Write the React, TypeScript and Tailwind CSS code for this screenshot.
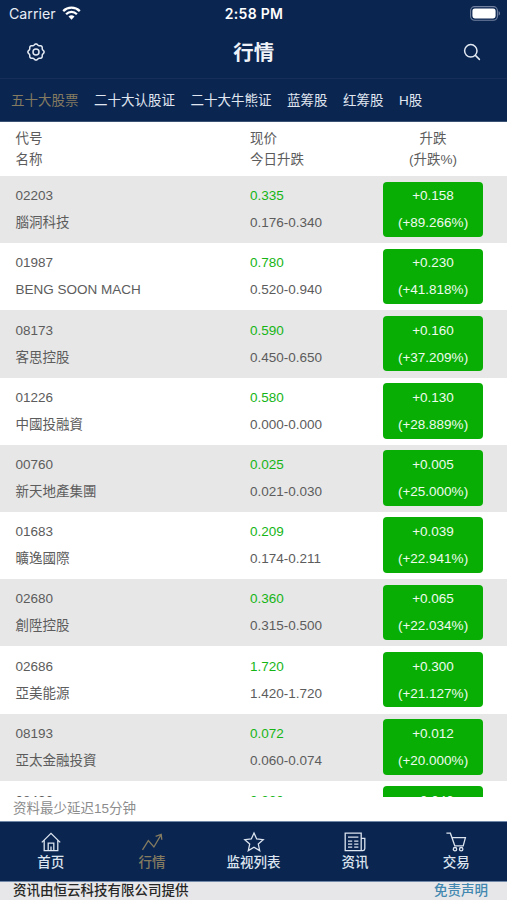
import type { ReactNode } from "react";

type Stock = {
  code: string;
  name: string;
  price: string;
  range: string;
  change: string;
  percent: string;
};

const categories = ["五十大股票", "二十大认股证", "二十大牛熊证", "蓝筹股", "红筹股", "H股"];

const stocks: Stock[] = [
  { code: "02203", name: "腦洞科技", price: "0.335", range: "0.176-0.340", change: "+0.158", percent: "(+89.266%)" },
  { code: "01987", name: "BENG SOON MACH", price: "0.780", range: "0.520-0.940", change: "+0.230", percent: "(+41.818%)" },
  { code: "08173", name: "客思控股", price: "0.590", range: "0.450-0.650", change: "+0.160", percent: "(+37.209%)" },
  { code: "01226", name: "中國投融資", price: "0.580", range: "0.000-0.000", change: "+0.130", percent: "(+28.889%)" },
  { code: "00760", name: "新天地產集團", price: "0.025", range: "0.021-0.030", change: "+0.005", percent: "(+25.000%)" },
  { code: "01683", name: "曠逸國際", price: "0.209", range: "0.174-0.211", change: "+0.039", percent: "(+22.941%)" },
  { code: "02680", name: "創陞控股", price: "0.360", range: "0.315-0.500", change: "+0.065", percent: "(+22.034%)" },
  { code: "02686", name: "亞美能源", price: "1.720", range: "1.420-1.720", change: "+0.300", percent: "(+21.127%)" },
  { code: "08193", name: "亞太金融投資", price: "0.072", range: "0.060-0.074", change: "+0.012", percent: "(+20.000%)" },
  { code: "08426", name: "", price: "0.260", range: "", change: "+0.040", percent: "" },
];

function GearIcon() {
  // eight-lobed outline, sampled around the centre
  const points = Array.from({ length: 96 }, (_, i) => {
    const a = (i / 96) * Math.PI * 2;
    const r = 7.5 + 0.6 * Math.cos(8 * a);
    return `${(9 + r * Math.cos(a)).toFixed(2)},${(9 + r * Math.sin(a)).toFixed(2)}`;
  }).join(" ");
  return (
    <svg className="mb-[2px]" width="18" height="18" viewBox="0 0 18 18" fill="none" stroke="#e3e9f2" strokeWidth="1.5">
      <polygon points={points} strokeLinejoin="round" />
      <circle cx="9" cy="9" r="3" />
    </svg>
  );
}

function StatusBar() {
  return (
    <div className="grid h-7 grid-cols-3 items-center pb-[1px] pl-[9px] pr-[6px] font-['Inter','Liberation_Sans',sans-serif] text-[14px] text-[#e8edf5]">
      <div className="flex items-center gap-[6px]">
        <span className="text-[14.2px]">Carrier</span>
        <svg width="19" height="14" viewBox="0 0 19 14" fill="none" stroke="#fff" strokeWidth="2.3">
          <path d="M1.2 5.1a11.8 11.8 0 0 1 16.6 0" />
          <path d="M4.1 8.2a7.6 7.6 0 0 1 10.8 0" />
          <path d="M9.5 13.7 6.5 10.6a4.3 4.3 0 0 1 6 0z" fill="#fff" stroke="none" />
        </svg>
      </div>
      <span className="-ml-[2px] text-center text-[14px] font-semibold tracking-[0.3px] text-white">2:58 PM</span>
      <svg className="justify-self-end" width="31" height="15" viewBox="0 0 31 15">
        <rect x="0.6" y="0.6" width="26.8" height="13.6" rx="4" fill="none" stroke="#71819f" strokeWidth="1.1" />
        <rect x="2.4" y="2.4" width="23.2" height="10" rx="2.4" fill="#fff" />
        <path d="M28.6 5.1c1.9.8 1.9 3.8 0 4.6z" fill="#71819f" />
      </svg>
    </div>
  );
}

function StockRow({ stock, shaded }: { stock: Stock; shaded: boolean }) {
  return (
    <div className={`flex h-[67.2px] shrink-0 pl-[15.5px] pt-[5.5px] leading-[27px] ${shaded ? "bg-[#e7e7e7]" : "bg-white"}`}>
      <div className="w-[234.5px] pt-[0.7px]">
        <div>{stock.code}</div>
        <div>{stock.name}</div>
      </div>
      <div className="w-[133.3px] pt-[0.7px]">
        <div className="text-[#16b516]">{stock.price}</div>
        <div>{stock.range}</div>
      </div>
      <div className="h-[55.5px] w-[99.5px] rounded-[4px] bg-[#08ae04] pt-[0.7px] text-center text-[#effbef]">
        <div>{stock.change}</div>
        <div>{stock.percent}</div>
      </div>
    </div>
  );
}

function NavItem({ label, active, children }: { label: string; active?: boolean; children: ReactNode }) {
  return (
    <div className={`flex flex-1 flex-col items-center pt-[9px] ${active ? "text-[#847b60]" : "text-[#dce4ef]"}`}>
      <svg width="22" height="22" viewBox="0 0 22 22" fill="none" stroke="currentColor" strokeWidth="1.3">
        {children}
      </svg>
      <span className="text-[13.5px] font-medium leading-[20px]">{label}</span>
    </div>
  );
}

export default function App() {
  return (
    <div className="flex h-[900px] w-[507px] flex-col overflow-hidden bg-white font-['Liberation_Sans','Noto_Sans_CJK_SC',sans-serif] text-[13.5px] text-[#5c5c5c]">
      <header className="h-[122px] shrink-0 border-b border-[#3b5275] bg-[#0a2550]">
        <StatusBar />
        <div className="flex h-[51px] items-center justify-between border-b border-[#172f58] pl-[26.5px] pr-[26px]">
          <GearIcon />
          <h1 className="text-[20.4px] font-bold text-[#eef2f8]">行情</h1>
          <svg className="mb-[2px]" width="18" height="18" viewBox="0 0 18 18" fill="none" stroke="#e3e9f2" strokeWidth="1.5">
            <circle cx="7.8" cy="7.8" r="6.2" />
            <path d="m12.4 12.4 4 4" strokeLinecap="round" />
          </svg>
        </div>
        <nav className="flex h-[43px] items-center gap-[15.5px] whitespace-nowrap pl-[11px] pt-[2px] text-[#e0e7f1]">
          {categories.map((c, i) => (
            <span key={c} className={i === 0 ? "text-[#847b60]" : ""}>{c}</span>
          ))}
        </nav>
      </header>

      <div className="flex h-[54px] shrink-0 pl-[15.5px] pt-[6px] leading-[21px]">
        <div className="w-[234.5px]">
          <div>代号</div>
          <div>名称</div>
        </div>
        <div className="w-[133.3px]">
          <div>现价</div>
          <div>今日升跌</div>
        </div>
        <div className="w-[99.5px] text-center">
          <div>升跌</div>
          <div>(升跌%)</div>
        </div>
      </div>

      <main className="flex h-[620.5px] shrink-0 flex-col overflow-hidden">
        {stocks.map((s, i) => (
          <StockRow key={s.code} stock={s} shaded={i % 2 === 0} />
        ))}
      </main>

      <div className="h-[24.5px] shrink-0 pl-[13px] leading-[24px] text-[#8c8c8c]">资料最少延迟15分钟</div>

      <nav className="flex h-[61px] shrink-0 border-y border-[#7288a8] bg-[#0a2550]">
        <NavItem label="首页">
          <path d="M1.8 11.4 11 2.4l9.2 9M4.2 9.2v10.4h13.6V9.2M8.2 19.4v-7.2h5.6v7.2M11 19.4v-4" />
        </NavItem>
        <NavItem label="行情" active>
          <path d="m1.5 18.8 5.8-9.2 5.6 6.4L20 3.8M14.6 5.4 20.2 3.4l.6 5.4" />
        </NavItem>
        <NavItem label="监视列表">
          <path d="m11 2 2.7 6 6.5.7-4.9 4.4 1.4 6.5-5.7-3.3-5.7 3.3 1.4-6.5-4.9-4.4 6.5-.7z" />
        </NavItem>
        <NavItem label="资讯">
          <path d="M1.2 2.2h16v17.4h-16zM17.2 7.4h3.6v10.4q0 1.8-1.8 1.8h-4M4 6.2h10.4" />
          <path d="M4 10.2h4.2M10.2 10.2h4.2M4 13.2h4.2M10.2 13.2h4.2M4 16.2h4.2M10.2 16.2h4.2" />
        </NavItem>
        <NavItem label="交易">
          <path d="M1.4 2.2h4l4.4 12.6h8.4l2.2-8.2H7" />
          <circle cx="10" cy="18.2" r="1.7" />
          <circle cx="16.2" cy="18.2" r="1.7" />
        </NavItem>
      </nav>

      <footer className="flex h-[18px] shrink-0 items-center justify-between bg-[#e7e7e9] pl-[13px] pr-[19px] leading-[18px]">
        <span className="font-medium text-[#262626]">资讯由恒云科技有限公司提供</span>
        <span className="font-medium text-[#4287b0]">免责声明</span>
      </footer>
    </div>
  );
}
